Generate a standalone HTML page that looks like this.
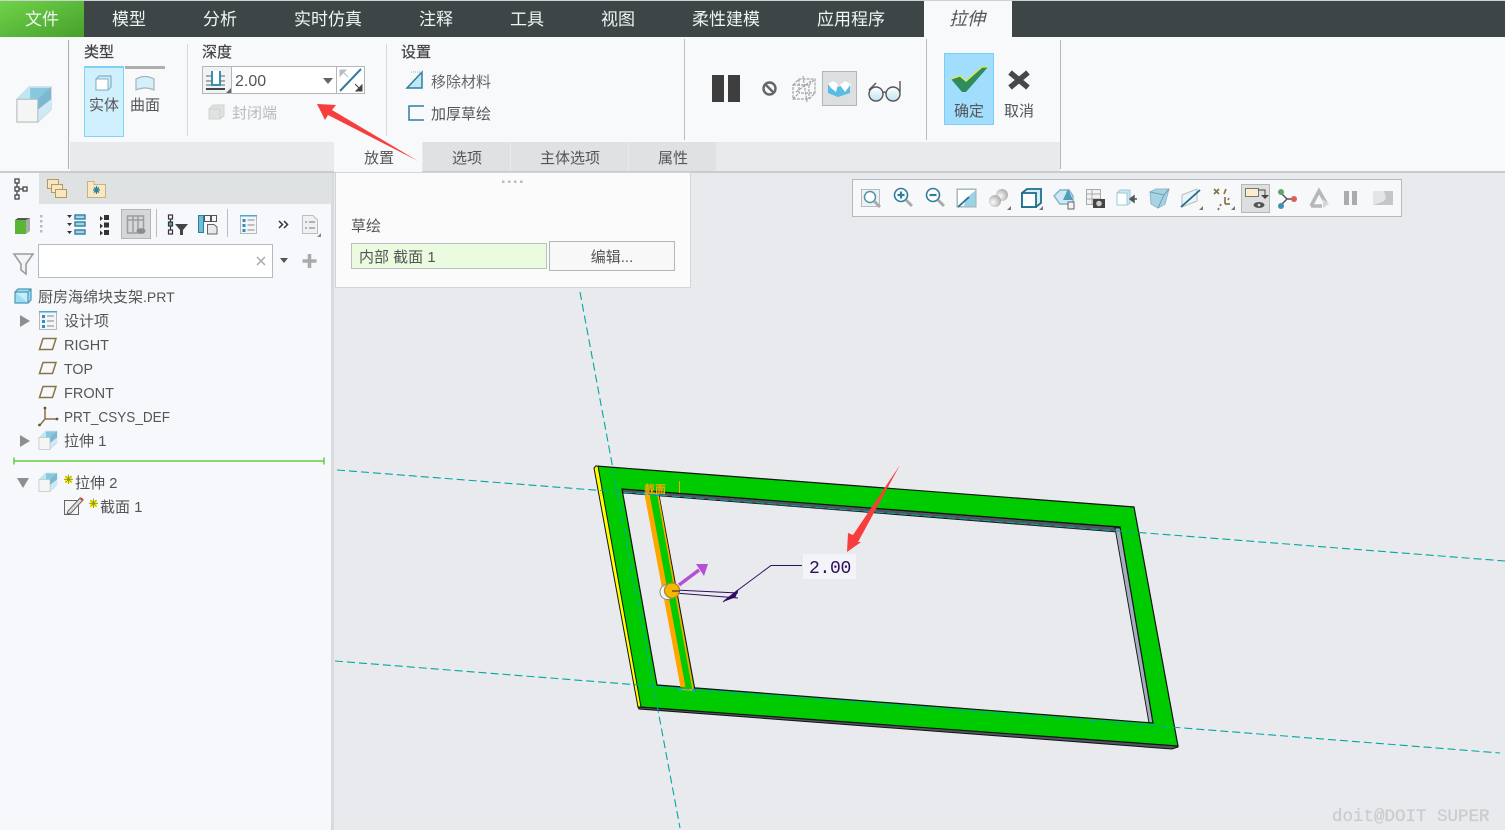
<!DOCTYPE html>
<html><head><meta charset="utf-8">
<style>
html,body{margin:0;padding:0;width:1505px;height:830px;overflow:hidden;background:#e9eaee}
svg{display:block;position:absolute;left:0;top:0}
text{font-family:"Liberation Sans","Noto Sans CJK SC",sans-serif;font-size:15px;fill:#555}
.m{text-anchor:middle}
.w{fill:#f2f4f4;font-size:17px;text-anchor:middle}
.b{font-size:15px;fill:#454545;stroke:#454545;stroke-width:.25px}
</style></head><body>
<svg width="1505" height="830" viewBox="0 0 1505 830" xmlns="http://www.w3.org/2000/svg">
<defs>
<linearGradient id="gr" x1="0" y1="0" x2="1" y2="1"><stop offset="0" stop-color="#6fd349"/><stop offset="1" stop-color="#46a02b"/></linearGradient>
<linearGradient id="lens" x1="0" y1="0" x2="0" y2="1"><stop offset="0" stop-color="#fff"/><stop offset="1" stop-color="#bfe4f2"/></linearGradient>
<radialGradient id="sph" cx=".35" cy=".6" r=".7"><stop offset="0" stop-color="#fbfbfb"/><stop offset="1" stop-color="#a8a8a8"/></radialGradient>
<symbol id="cube" viewBox="0 0 40 40" overflow="visible">
<path d="M2 15 L15 2 H38 V26 L24 39 H2Z" fill="#cfeaf5" stroke="#c4ced2" stroke-width="1"/>
<path d="M15 2H38L24 15H2Z" fill="#bfe6f4"/>
<path d="M16 3H37V6L24 15H16Z" fill="#86c8de"/>
<path d="M24 15 L38 2 V26 L24 39Z" fill="#7db8d0"/>
<path d="M24 26 L38 15 V26 L24 39Z" fill="#cfeaf5"/>
<rect x="2" y="15" width="22" height="24" fill="#f5f5f5" stroke="#b9bebf" stroke-width="1.2"/>
</symbol>
<symbol id="plane" viewBox="0 0 20 14" overflow="visible"><path d="M5 1.5H18L14.5 12.5H1.5Z" fill="none" stroke="#8b7449" stroke-width="1.5"/></symbol>
</defs>

<!-- top bar -->
<rect x="0" y="0" width="1505" height="1" fill="#cfd2d2"/>
<rect x="0" y="1" width="1505" height="36" fill="#3d4547"/>
<rect x="0" y="1" width="84" height="36" fill="url(#gr)"/>
<rect x="924" y="1" width="88" height="36" fill="#f8f9fb"/>
<text class="w" x="42" y="25">文件</text>
<text class="w" x="129" y="25">模型</text>
<text class="w" x="220" y="25">分析</text>
<text class="w" x="328" y="25">实时仿真</text>
<text class="w" x="436" y="25">注释</text>
<text class="w" x="527" y="25">工具</text>
<text class="w" x="618" y="25">视图</text>
<text class="w" x="726" y="25">柔性建模</text>
<text class="w" x="851" y="25">应用程序</text>
<text x="967" y="25" text-anchor="middle" style="font-size:18px;font-style:italic;fill:#555">拉伸</text>

<!-- ribbon -->
<rect x="0" y="37" width="1505" height="134" fill="#f8f9fb"/>
<rect x="70" y="142" width="990" height="29" fill="#e9eaeb"/>
<rect x="0" y="171" width="1505" height="2" fill="#c8cccc"/>
<rect x="68" y="40" width="1" height="129" fill="#a9afb0"/>
<rect x="1060" y="40" width="1" height="129" fill="#b4b9ba"/>
<rect x="187" y="44" width="1" height="92" fill="#d6d9da"/>
<rect x="386" y="44" width="1" height="92" fill="#d6d9da"/>
<rect x="684" y="39" width="1" height="101" fill="#b9bdbe"/>
<rect x="926" y="39" width="1" height="101" fill="#b9bdbe"/>

<!-- bottom tabs -->
<rect x="334" y="142" width="88" height="30" fill="#f8f9fb"/>
<rect x="423" y="142" width="87" height="29" fill="#e0e1e3"/>
<rect x="511" y="142" width="117" height="29" fill="#e0e1e3"/>
<rect x="629" y="142" width="87" height="29" fill="#e0e1e3"/>
<text class="m" x="379" y="163">放置</text>
<text class="m" x="467" y="163">选项</text>
<text class="m" x="570" y="163">主体选项</text>
<text class="m" x="673" y="163">属性</text>

<!-- big cube -->
<use href="#cube" x="15" y="85" width="38" height="38"/>

<!-- type -->
<text class="b" x="84" y="57">类型</text>
<text class="b" x="202" y="57">深度</text>
<text class="b" x="401" y="57">设置</text>
<rect x="84.500" y="67.500" width="39" height="69" fill="#d0f0fd" stroke="#83d3f5"/>
<rect x="84" y="66" width="40" height="2" fill="#7fd0f3"/>
<rect x="125" y="66" width="40" height="3" fill="#aeaeae"/>
<path d="M96 79 L99 76 H111 V87 L108 90 H96Z" fill="#cfe8f1" stroke="#7fb3c6" stroke-width="1.2"/>
<rect x="96" y="79" width="12" height="11" fill="#fff" stroke="#7fb3c6"/>
<path d="M136 79 Q145 74 154 79 V90 Q145 86 136 90Z" fill="#d3f0fb" stroke="#a9b3b6" stroke-width="1.2"/>
<text class="m" x="104" y="110">实体</text>
<text class="m" x="145" y="110">曲面</text>

<!-- depth -->
<rect x="202.500" y="66.500" width="162" height="27" fill="#fff" stroke="#b3b6b8"/>
<rect x="203" y="67" width="28" height="26" fill="#f1f2f3"/>
<rect x="231" y="67" width="1" height="26" fill="#b3b6b8"/>
<rect x="336" y="67" width="1" height="26" fill="#b3b6b8"/>
<path d="M206 76H225M206 81H225M206 85H225" stroke="#8d9396" stroke-width="1.5"/>
<path d="M212 71V85H220V71" fill="#fff" stroke="#3b8fb3" stroke-width="2"/>
<path d="M206 89H225" stroke="#444" stroke-width="2"/>
<path d="M231 88V93H226Z" fill="#666"/>
<text x="235" y="86" style="font-size:16px">2.00</text>
<path d="M323 78H333L328 84Z" fill="#666"/>
<path d="M340 91L361 69" stroke="#2f7f9c" stroke-width="2"/>
<path d="M340 70H346L340 76Z M344 73L348 77" fill="#b9bcbe" stroke="#b9bcbe"/>
<path d="M362 91H356L362 85Z M355 84L359 88" fill="#444" stroke="#444"/>
<path d="M209 109L213 105H224V116L220 119H209Z" fill="#e0e1e1" stroke="#d0d2d2"/>
<path d="M209 109H220V119" fill="none" stroke="#cfd1d1"/>
<text x="232" y="118" style="fill:#b8babb">封闭端</text>

<!-- settings -->
<path d="M407 88L422 72V88Z" fill="#bfe7f5" stroke="#2f7f9c" stroke-width="1.500"/>
<path d="M411 72H422" stroke="#aaa" stroke-dasharray="1 1"/>
<text x="431" y="87" style="fill:#666">移除材料</text>
<path d="M424 106H409V120H424" fill="none" stroke="#2f7f9c" stroke-width="1.500"/>
<text x="431" y="119">加厚草绘</text>

<!-- pause group -->
<rect x="712" y="75" width="12" height="27" fill="#3e3e3e"/>
<rect x="728" y="75" width="12" height="27" fill="#3e3e3e"/>
<circle cx="769.500" cy="88.500" r="6" fill="none" stroke="#666" stroke-width="2.400"/>
<path d="M765 84L774 93" stroke="#666" stroke-width="2.400"/>
<g fill="none" stroke="#a5a5a5" stroke-width="1.200" stroke-dasharray="3 1"><path d="M793 85L799 79H815V93L809 99H793Z"/><path d="M793 85H809V99M809 85L815 79M799 79V93H815M793 99L799 93M803 76L807 102M796 92L811 81"/></g>
<rect x="822.500" y="71.500" width="34" height="34" fill="#dcdedf" stroke="#b3b5b6"/>
<path d="M828 84L838 87V97L828 93Z" fill="#57bde4"/><path d="M838 87L850 83V93L838 97Z" fill="#57bde4"/>
<path d="M828 84L833 81L838 84L836 92L831 88ZM840 85L845 81L851 84L845 92Z" fill="#fff"/>
<g fill="none" stroke="#555" stroke-width="1.400"><path d="M869 90L876 83"/><circle cx="876" cy="94" r="7" fill="url(#lens)"/><circle cx="893" cy="94" r="7" fill="url(#lens)"/><path d="M883 93Q884.500 91 886 93M900 92V81"/></g>

<!-- OK / Cancel -->
<rect x="944.500" y="53.500" width="49" height="71" fill="#a1defd" stroke="#7ccdf5"/>
<path d="M951 79L960 76L966 82L982 67H988L966 92H962Z" fill="#2f8c5c"/>
<path d="M951 79L960 76L966 81L982 67H988" fill="none" stroke="#e6e640" stroke-width="1.300"/>
<text class="m" x="969" y="116">确定</text>
<path d="M1010 72.500L1028 87.500M1028 72.500L1010 87.500" stroke="#484848" stroke-width="5.500"/>
<text class="m" x="1019" y="116">取消</text>

<!-- left panel -->
<rect x="0" y="173" width="331" height="657" fill="#f6f8fb"/>
<rect x="331" y="173" width="3" height="657" fill="#d8dbdd"/>
<rect x="39" y="173" width="293" height="31" fill="#dfe2e2"/>
<g fill="none" stroke="#444" stroke-width="1.300">
<rect x="15" y="179" width="4" height="4"/><rect x="15" y="187" width="4" height="4"/><rect x="15" y="195" width="4" height="4"/><rect x="23" y="187" width="4" height="4"/>
<path d="M17 183V187M17 191V195M19 189H23"/></g>
<g stroke="#b59a5f" fill="#f7e6bf"><rect x="47.500" y="179.500" width="11" height="9"/><rect x="51.500" y="184.500" width="11" height="8"/><rect x="55.500" y="189.500" width="11" height="8"/></g>
<path d="M87.500 184.500V181.500H94V184.500H105.500V197.500H87.500Z" fill="#f8e9c5" stroke="#c9b27e"/>
<path d="M96.500 186v8M93 190h7M94 187.500l5 5M99 187.500l-5 5" stroke="#2f7f9c" stroke-width="1.300"/>

<!-- left toolbar -->
<path d="M15 220H26L30 218V231L26 234H15Z" fill="#a9aaaa"/><rect x="15" y="220" width="11" height="14" fill="#59b534"/><path d="M15 220L18 218H30L26 220Z" fill="#555"/>
<g fill="#b8bcbd"><rect x="40" y="215" width="2.500" height="2.500"/><rect x="40" y="220" width="2.500" height="2.500"/><rect x="40" y="225" width="2.500" height="2.500"/><rect x="40" y="230" width="2.500" height="2.500"/></g>
<g><path d="M67 215h5l-2.500 3zM67 223h5l-2.500 3zM67 231h5l-2.500 3z" fill="#333"/>
<g fill="#9ad6ee" stroke="#2f7f9c" stroke-width="1.400"><rect x="75" y="215" width="10" height="4"/><rect x="75" y="222" width="10" height="4"/><rect x="75" y="230" width="10" height="4"/></g></g>
<g fill="#333"><path d="M100 216l3 2.500l-3 2.500zM100 223.500l3 2.500l-3 2.500zM100 230.500l3 2.500l-3 2.500z"/><rect x="104" y="215" width="5" height="5"/><rect x="104" y="222.500" width="5" height="5"/><rect x="104" y="230" width="5" height="5"/></g>
<rect x="121.500" y="209.500" width="29" height="29" fill="#d5d7d8" stroke="#b4b6b7"/>
<g fill="none" stroke="#9b9d9e" stroke-width="1.500"><rect x="127.500" y="216" width="16" height="17"/><path d="M127.500 220h16M133 216v17M138 216v17"/></g><ellipse cx="141" cy="231" rx="4.500" ry="2.800" fill="#8a8c8d"/>
<rect x="156" y="209" width="1" height="28" fill="#b9bdbe"/>
<g fill="none" stroke="#333" stroke-width="1.200"><rect x="168.500" y="215" width="4" height="4"/><rect x="168.500" y="222" width="4" height="4" fill="#4aa8d0"/><rect x="168.500" y="230" width="4" height="4"/><path d="M170.500 219v3M170.500 226v4"/></g>
<path d="M175 224H188L183 230V235H180V230Z" fill="#444"/>
<rect x="198.500" y="215.500" width="5" height="17" fill="#6fbbda" stroke="#2f7f9c"/>
<g fill="none" stroke="#555"><rect x="204.500" y="215.500" width="6" height="6"/><rect x="211.500" y="215.500" width="5" height="6"/></g><path d="M207.500 224.500H214L217 227V234H207.500Z" fill="#e8e9ea" stroke="#666"/>
<rect x="227" y="209" width="1" height="28" fill="#b9bdbe"/>
<rect x="240.500" y="215.500" width="16" height="18" fill="#f3f5f6" stroke="#b4b9bb"/><rect x="240" y="215" width="17" height="1.500" fill="#4aa8d0"/>
<g fill="#2f8fc0"><rect x="242.500" y="219" width="3" height="3"/><rect x="242.500" y="224" width="3" height="3"/><rect x="242.500" y="229" width="3" height="3"/></g><path d="M247.500 220h7M247.500 225h7M247.500 230h7" stroke="#888"/>
<path d="M279 221l3.500 3.500l-3.500 3.500M284 221l3.500 3.500l-3.500 3.500" fill="none" stroke="#333" stroke-width="1.500"/>
<path d="M302.500 215.500H313L317.500 220V233.500H302.500Z" fill="#eef0f2" stroke="#bcbfc1"/>
<path d="M305 222h2M309 222h6M305 228h2M309 228h6" stroke="#777"/><path d="M321 233v4h-4z" fill="#888"/>

<!-- search -->
<path d="M14 254H33L26 264V274L21 270V264Z" fill="#f3f4f5" stroke="#9a9d9e" stroke-width="1.600"/>
<rect x="38.500" y="244.500" width="234" height="33" fill="#fff" stroke="#b3bbbb"/>
<path d="M257 257L265 265M265 257L257 265" stroke="#a9abac" stroke-width="1.500"/>
<path d="M280 258H288L284 263Z" fill="#555"/>
<path d="M309.500 254V268M302.500 261H316.500" stroke="#a8aaab" stroke-width="3.500"/>

<!-- tree -->
<path d="M15 292L18 289H31V300L28 303H15Z" fill="#9adff5" stroke="#4c97b4" stroke-width="1.200"/><path d="M15 292H28V303M28 292L31 289" stroke="#4c97b4" fill="#c6eefa" stroke-width="1.200"/>
<text x="38" y="302">厨房海绵块支架<tspan style="font-size:14px">.PRT</tspan></text>
<path d="M20 315L30 321L20 327Z" fill="#8d8f90"/>
<rect x="39.500" y="311.500" width="17" height="18" fill="#f3f5f6" stroke="#b4b9bb"/><rect x="39" y="311" width="18" height="1.500" fill="#4aa8d0"/>
<g fill="#2f8fc0"><rect x="42" y="315" width="3" height="3"/><rect x="42" y="320" width="3" height="3"/><rect x="42" y="325" width="3" height="3"/></g><path d="M47 316h7M47 321h7M47 326h7" stroke="#888"/>
<text x="64" y="326">设计项</text>
<use href="#plane" x="38" y="337" width="20" height="14"/><text x="64" y="350" textLength="45" lengthAdjust="spacingAndGlyphs">RIGHT</text>
<use href="#plane" x="38" y="361" width="20" height="14"/><text x="64" y="374" textLength="29" lengthAdjust="spacingAndGlyphs">TOP</text>
<use href="#plane" x="38" y="385" width="20" height="14"/><text x="64" y="398" textLength="50" lengthAdjust="spacingAndGlyphs">FRONT</text>
<path d="M45 409V419L40 425M45 419H57" fill="none" stroke="#8b7449" stroke-width="1.500"/><circle cx="45" cy="408" r="1.400" fill="#6a5530"/><circle cx="57" cy="419" r="1.400" fill="#6a5530"/><circle cx="39.500" cy="425" r="1.400" fill="#6a5530"/>
<text x="64" y="422" textLength="106" lengthAdjust="spacingAndGlyphs">PRT_CSYS_DEF</text>
<path d="M20 435L30 441L20 447Z" fill="#8d8f90"/>
<use href="#cube" x="38" y="430" width="20" height="20"/><text x="64" y="446">拉伸 1</text>
<path d="M14 461H324" stroke="#66cc44" stroke-width="1.500"/><path d="M14 457.500V464.500M324 457.500V464.500" stroke="#66cc44" stroke-width="1.500"/>
<path d="M17 478H29L23 488Z" fill="#8d8f90"/>
<use href="#cube" x="38" y="472" width="20" height="20"/>
<rect x="65" y="476" width="7" height="7" fill="#ff0"/><path d="M68.500 474.500v9.500M64 479.300h9M65.500 476l6 6.500M71.500 476l-6 6.500" stroke="#8a8a3a" stroke-width=".8"/>
<text x="75" y="488">拉伸 2</text>
<rect x="64.500" y="500.500" width="14" height="14" fill="#f5f5f5" stroke="#666"/>
<path d="M68 511L80 498L83 500L71 513L67 514Z" fill="#ddd" stroke="#666"/><path d="M80 498L83 500" stroke="#c44" stroke-width="2"/>
<rect x="90" y="500" width="7" height="7" fill="#ff0"/><path d="M93.500 498.500v9.500M89 503.300h9M90.500 500l6 6.500M96.500 500l-6 6.500" stroke="#8a8a3a" stroke-width=".8"/>
<text x="100" y="512">截面 1</text>

<!-- popup panel -->
<rect x="335.500" y="172.500" width="355" height="115" fill="#fbfbfb" stroke="#d3d5d8"/>
<g fill="#b9bbbd"><rect x="502" y="180.500" width="2.500" height="2.500"/><rect x="508" y="180.500" width="2.500" height="2.500"/><rect x="514" y="180.500" width="2.500" height="2.500"/><rect x="520" y="180.500" width="2.500" height="2.500"/></g>
<text x="351" y="231">草绘</text>
<rect x="351.500" y="243.500" width="195" height="25" fill="#eafbdf" stroke="#bcbfc1"/>
<text x="359" y="262">内部 截面 1</text>
<rect x="549.500" y="241.500" width="125" height="29" fill="#f8f8f8" stroke="#b4b6b8"/>
<text class="m" x="612" y="262">编辑...</text>

<!-- toolbar over viewport -->
<rect x="852.500" y="179.500" width="549" height="37" fill="#f7f8fa" stroke="#b7babd"/>
<rect x="1241.500" y="184.500" width="28" height="28" fill="#dcdedf" stroke="#b5b7b8"/>
<!-- t1 fit -->
<rect x="861.500" y="189.500" width="18" height="17" fill="#eef1f2" stroke="#b9bcbe"/><circle cx="870" cy="197" r="5.500" fill="#fff" stroke="#4f93ad" stroke-width="1.500"/><path d="M874 201L880 207" stroke="#aaa" stroke-width="2.800"/>
<!-- t2 zoom in -->
<circle cx="901" cy="195" r="6.500" fill="#fff" stroke="#2f7f9c" stroke-width="1.600"/><path d="M897.500 195H904.500M901 191.500V198.500" stroke="#2f7f9c" stroke-width="2.200"/><path d="M906 200L912 206" stroke="#aaa" stroke-width="2.800"/>
<!-- t3 zoom out -->
<circle cx="933" cy="195" r="6.500" fill="#fff" stroke="#2f7f9c" stroke-width="1.600"/><path d="M929.500 195H936.500" stroke="#2f7f9c" stroke-width="2.200"/><path d="M938 200L944 206" stroke="#aaa" stroke-width="2.800"/>
<!-- t4 -->
<rect x="957" y="189" width="19" height="18" fill="#9bd3e6" stroke="#a9adaf"/><path d="M958 190H975V191C970 194 965 199 964 206H958Z" fill="#fff"/><path d="M958 207L969 197" stroke="#2a6f8e" stroke-width="1.800"/>
<!-- t5 -->
<circle cx="1002" cy="195" r="6" fill="url(#sph)"/><circle cx="995" cy="201" r="6" fill="url(#sph)"/><path d="M1011 206v4h-4z" fill="#777"/>
<!-- t6 -->
<path d="M1022 193L1027 189H1041V203L1036 207H1022Z" fill="#d8eef6" stroke="#1f6d8e" stroke-width="1.800"/><rect x="1022" y="193" width="14" height="14" fill="#fff" stroke="#1f6d8e" stroke-width="1.800"/><path d="M1043 206v4h-4z" fill="#777"/>
<!-- t7 -->
<path d="M1054 196L1060 190H1069L1073 196V204H1060Z" fill="#cfeaf5" stroke="#7fb3c6" stroke-width="1.400"/><path d="M1068 189L1073 200H1063Z" fill="#4f9cbd"/><rect x="1068" y="202" width="6" height="7" fill="#f3f3f3" stroke="#666"/>
<!-- t8 -->
<rect x="1086.500" y="189.500" width="14" height="15" fill="#f1f2f3" stroke="#aaa"/><path d="M1087 194H1100M1087 199H1100M1092 190V204" stroke="#aaa"/><rect x="1093" y="199" width="12" height="9" fill="#444"/><circle cx="1099" cy="203.500" r="2.800" fill="#ccc"/>
<!-- t9 -->
<path d="M1117 193L1120 190H1130V203L1127 205H1117Z" fill="#c9e9f5" stroke="#9cc9d8"/><rect x="1117" y="193" width="10" height="12" fill="#fff" stroke="#9cc9d8"/><path d="M1130 199H1137M1130 199L1134 196V202Z" stroke="#555" stroke-width="1.500" fill="#555"/>
<!-- t10 -->
<path d="M1150 192L1156 189H1169L1165 204L1158 208L1151 204Z" fill="#a7d3e3" stroke="#8fb8c7"/><path d="M1150 192L1164 195L1169 189M1164 195L1158 208" stroke="#6fa0b5" fill="none"/>
<!-- t11 -->
<path d="M1182 195L1197 189V201L1182 207Z" fill="#eaf5f9" stroke="#bbb"/><path d="M1181 207L1200 190" stroke="#1f6d8e" stroke-width="1.800"/><path d="M1203 206v4h-4z" fill="#777"/>
<!-- t12 -->
<g stroke="#8b7449" stroke-width="1.700" fill="none"><path d="M1214 189l5 5M1219 189l-5 5M1226 189l-2 5M1225 197v7M1225 204h5M1221 204l-1 2M1219 208l-1 2M1229 198l-1 2"/></g><path d="M1235 206v4h-4z" fill="#777"/>
<!-- t13 -->
<rect x="1245.500" y="188.500" width="13" height="8" fill="#fbeccd" stroke="#777"/><path d="M1258 190h7v5" stroke="#444" fill="none"/><path d="M1261 195h8l-4 4z" fill="#444"/><ellipse cx="1259" cy="205" rx="5.500" ry="3" fill="#555"/><circle cx="1259" cy="205" r="1.300" fill="#ddd"/>
<!-- t14 -->
<path d="M1281 193L1287 199H1293M1287 199L1281 205" stroke="#555" stroke-width="1.500" fill="none"/><circle cx="1281" cy="192" r="3" fill="#5fa768"/><circle cx="1294" cy="199" r="3" fill="#d9605a"/><circle cx="1281" cy="206" r="3" fill="#3f8fb8"/>
<!-- t15 -->
<path d="M1311 206L1319 191L1326 203" fill="none" stroke="#b5b7b8" stroke-width="3.500"/><path d="M1311 206H1322" stroke="#b5b7b8" stroke-width="3.500"/><path d="M1323 199L1329 204L1323 208Z" fill="#d5d7d8"/>
<!-- t16 -->
<rect x="1344" y="191" width="5" height="14" fill="#a9abac"/><rect x="1352" y="191" width="5" height="14" fill="#a9abac"/>
<!-- t17 -->
<path d="M1373 191H1393V205H1373L1384 201V196Z" fill="#c4c6c7"/>
<path d="M1373 191H1384L1386 198L1384 201L1373 205" fill="#e4e5e6"/>

<!-- 3D frame -->
<path d="M638 707 L639 709 L1172 749 L1178 747 L1178 745 L639 704Z" fill="#50555e" stroke="#111" stroke-width="1"/>
<path d="M622 489 L1116 527 L1116 532 L623 493Z" fill="#50555e" stroke="#111" stroke-width=".8"/>
<path d="M1115 528 L1121 528 L1153 723 L1149 723Z" fill="#a3adbd" stroke="#111" stroke-width=".9"/>
<path fill-rule="evenodd" d="M596 466 L1134 507 L1178 746 L640 707 Z M622 489 L1120 527 L1153 723 L657 685Z" fill="#00cb00" stroke="#111" stroke-width="1.200"/>
<path d="M594 468 L596 466 L598 466 L641 707 L638 707Z" fill="#ffff00" stroke="#111" stroke-width="1"/>
<!-- rib -->
<path d="M647 494 L659 495 L695 690 L682 689Z" fill="#00cb00" stroke="#111" stroke-width="1"/>
<path d="M647 494 L683 687" stroke="#ffa500" stroke-width="5"/>
<path d="M658 495 L693 689" stroke="#ffa500" stroke-width="1.600"/>
<path d="M645 494H658M680 689L693 690" stroke="#ffa500" stroke-width="1.800"/>
<rect x="643.500" y="492" width="3" height="3" fill="#10a8c8"/><rect x="656.500" y="493" width="3" height="3" fill="#10a8c8"/><rect x="679" y="688" width="3" height="3" fill="#10a8c8"/><rect x="692" y="689" width="3" height="3" fill="#10a8c8"/>
<text x="644" y="493" style="font-size:11px;font-weight:bold;fill:#ffa500">截面</text>
<path d="M679.500 481V493" stroke="#ffa500"/>

<!-- datum lines -->
<g fill="none" stroke="#00a8a0" stroke-width="1.100" stroke-dasharray="8 4">
<path d="M580 292 L680 828"/>
<path d="M337 470 L1505 561"/>
<path d="M335 661 L1500 753"/>
</g>

<!-- dim -->
<path d="M802 565.500H771L738 590L723 602" fill="none" stroke="#2e0d5e" stroke-width="1"/>
<path d="M675 590 L738 593M675 593L738 598" stroke="#2e0d5e" stroke-width="1"/>
<path d="M724 601L738 590L735 597Z" fill="#2e0d5e" stroke="#2e0d5e"/>
<path d="M679 585L699 570" stroke="#b44fd8" stroke-width="3.500"/><path d="M696 564L708 564L704 576Z" fill="#b44fd8"/>
<circle cx="667.500" cy="592" r="7.500" fill="#f5f5f5" stroke="#8a8a8a"/>
<circle cx="672" cy="590.500" r="7.500" fill="#f5b800" stroke="#a8892c" stroke-width="1.300"/>
<path d="M672 591H680" stroke="#2e0d5e"/>
<rect x="803" y="554" width="53" height="25" fill="#f3f4f8"/>
<text x="809" y="573" style="font-family:'Liberation Mono',monospace;font-size:18px;letter-spacing:-.3px;fill:#2e0d5e">2.00</text>

<!-- red arrows -->
<path d="M317 104L336 105L332 110L418 161L328 115L325 120Z" fill="#f83d3d"/>
<path d="M847 552L848 533L853 535L900 465L858 542L861 542Z" fill="#f83d3d"/>

<!-- watermark -->
<text x="1332" y="821" style="font-family:'Liberation Mono',monospace;font-size:17.500px;fill:#cbccce;stroke:#cbccce;stroke-width:.3px">doit@DOIT SUPER</text>
</svg>
</body></html>
